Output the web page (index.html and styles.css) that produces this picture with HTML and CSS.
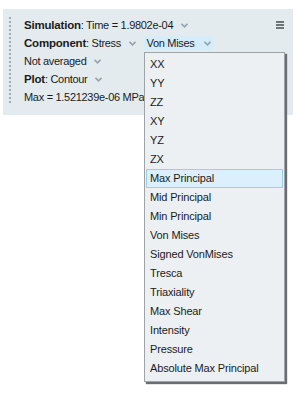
FILE: index.html
```html
<!DOCTYPE html>
<html lang="en">
<head>
    <meta charset="UTF-8">
    <title>Result Panel</title>
    <link rel="stylesheet" href="styles.css">
</head>
<body>
    <div class="panel">
        <div class="grip"></div>
        <div class="rows">
            <div class="row"><b>Simulation</b>: Time = 1.9802e-04 <span class="chev"></span></div>
            <div class="row"><b>Component</b>: Stress <span class="chev"></span> <span class="picked">Von Mises <span class="chev"></span></span></div>
            <div class="row">Not averaged <span class="chev"></span></div>
            <div class="row"><b>Plot</b>: Contour <span class="chev"></span></div>
            <div class="row">Max = 1.521239e-06 MPa</div>
        </div>
        <div class="menu-btn"><span></span><span></span><span></span></div>
    </div>

    <ul class="dropdown">
        <li>XX</li>
        <li>YY</li>
        <li>ZZ</li>
        <li>XY</li>
        <li>YZ</li>
        <li>ZX</li>
        <li class="hover">Max Principal</li>
        <li>Mid Principal</li>
        <li>Min Principal</li>
        <li>Von Mises</li>
        <li>Signed VonMises</li>
        <li>Tresca</li>
        <li>Triaxiality</li>
        <li>Max Shear</li>
        <li>Intensity</li>
        <li>Pressure</li>
        <li>Absolute Max Principal</li>
    </ul>
</body>
</html>
```

FILE: styles.css
```css
body {
    margin: 0;
    background: #ffffff;
    font-family: "Liberation Sans", Arial, sans-serif;
    font-size: 11px;
    letter-spacing: -0.15px;
    color: #1b1b1b;
    position: relative;
    width: 308px;
    height: 416px;
    overflow: hidden;
}

.panel {
    margin: 9px 0 0 3px;
    width: 290px;
    height: 106px;
    background: #e4ebef;
    display: flex;
    box-sizing: border-box;
    padding-top: 7px;
}

.grip {
    width: 2px;
    margin: 1px 0 0 6px;
    height: 86px;
    background-image: linear-gradient(#a6abb0 50%, transparent 50%);
    background-size: 2px 4px;
}

.rows {
    margin-left: 13px;
    flex: 1;
    letter-spacing: -0.3px;
}

.row {
    height: 18px;
    line-height: 18px;
    white-space: nowrap;
}

.row b {
    font-weight: bold;
    font-size: 11.5px;
    letter-spacing: -0.2px;
}

.chev {
    display: inline-block;
    width: 7px;
    height: 5px;
    margin-left: 5px;
    vertical-align: 1px;
    background: url("data:image/svg+xml;utf8,<svg xmlns='http://www.w3.org/2000/svg' width='7' height='5'><path d='M0.5 0.8 L3.5 3.8 L6.5 0.8' fill='none' stroke='%2394a3ae' stroke-width='1.6'/></svg>") no-repeat;
}

.picked {
    display: inline-block;
    background: #d5edfb;
    padding: 0 2px 0 3px;
    margin-left: 5px;
    line-height: 14px;
}

.picked .chev {
    margin-left: 7px;
}

.menu-btn {
    display: flex;
    flex-direction: column;
    gap: 1px;
    width: 8px;
    margin: 5px 9px 0 0;
}

.menu-btn span {
    display: block;
    height: 2px;
    background: #6f7478;
}

.dropdown {
    position: absolute;
    left: 144px;
    top: 52px;
    width: 137px;
    margin: 0;
    padding: 2px 1px 3px 1px;
    list-style: none;
    background: #ecf0f3;
    border: 1px solid #9ea3a7;
    box-shadow: 2px 2px 1px #6a6e72;
}

.dropdown li {
    height: 19px;
    line-height: 19px;
    padding-left: 4px;
    box-sizing: border-box;
    white-space: nowrap;
}

.dropdown li.hover {
    background: #dbf0fc;
    border: 1px solid #9fcde6;
    line-height: 17px;
    padding-left: 3px;
}
```
